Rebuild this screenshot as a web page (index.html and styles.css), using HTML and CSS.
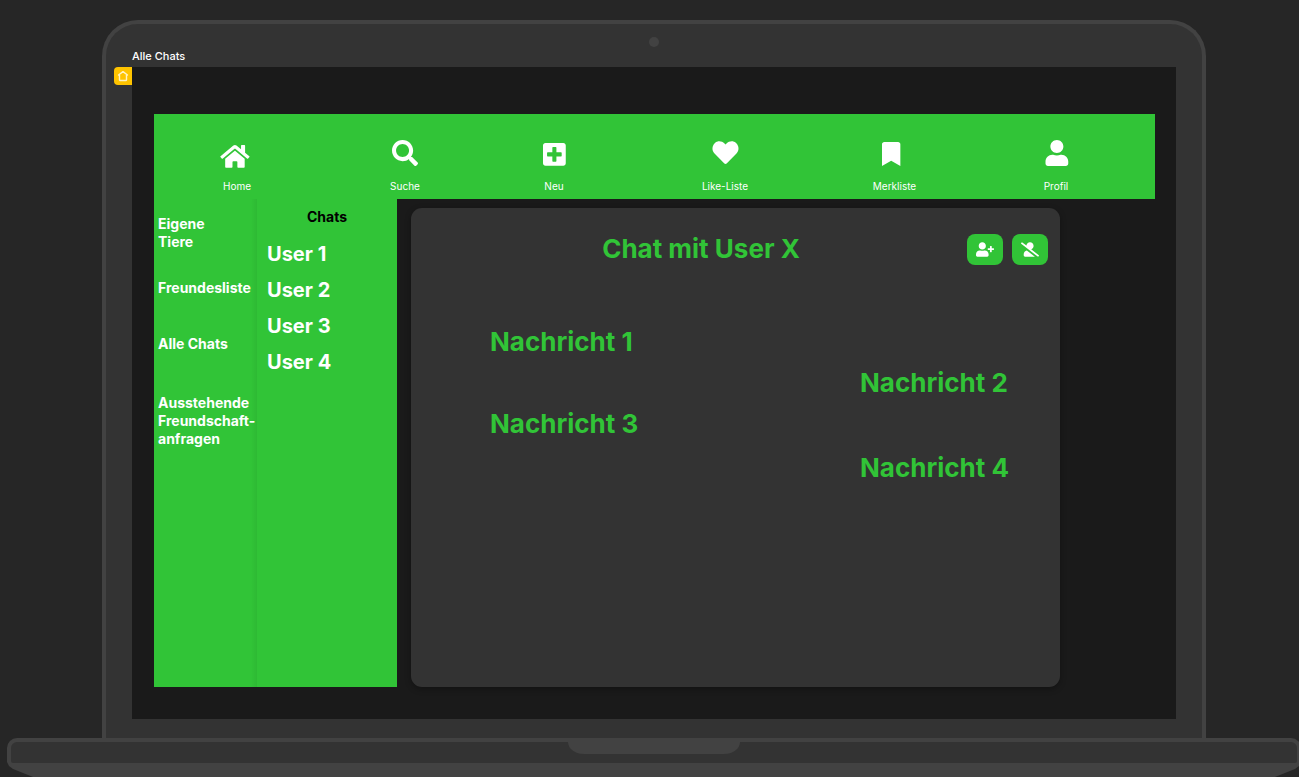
FILE: index.html
```html
<!DOCTYPE html>
<html lang="de">
<head>
<meta charset="utf-8">
<title>Alle Chats</title>
<link rel="stylesheet" href="styles.css">
</head>
<body>
<div class="lid">
  <div class="bezel">
    <span class="screen-name">Alle Chats</span>
    <span class="camera"></span>
  </div>
  <div class="screen">
    <span class="start-flag">
      <svg width="12" height="12" viewBox="0 0 12 12" aria-hidden="true"><path d="M6 1.6 1.5 5h1v5.1c0 .2.2.4.4.4h6.2c.2 0 .4-.2.4-.4V5h1z" fill="none" stroke="#fff3c4" stroke-width="1.4" stroke-linejoin="round"/></svg>
    </span>
    <nav class="topnav">
      <a class="tab" href="#home">
        <svg class="tab-icon" viewBox="0 0 36 30" aria-hidden="true"><path transform="translate(1.3 4.4) scale(.0508)" d="M280.37 148.26L96 300.11V464a16 16 0 0 0 16 16l112.06-.29a16 16 0 0 0 15.92-16V368a16 16 0 0 1 16-16h64a16 16 0 0 1 16 16v95.64a16 16 0 0 0 16 16.05L464 480a16 16 0 0 0 16-16V300L295.67 148.26a12.19 12.19 0 0 0-15.3 0zM571.6 251.47L488 182.56V44.05a12 12 0 0 0-12-12h-56a12 12 0 0 0-12 12v72.61L318.47 43a48 48 0 0 0-61 0L4.34 251.47a12 12 0 0 0-1.6 16.9l25.5 31A12 12 0 0 0 45.15 301l235.22-193.74a12.19 12.19 0 0 1 15.3 0L530.9 301a12 12 0 0 0 16.9-1.6l25.5-31a12 12 0 0 0-1.7-16.93z"/></svg>
        <span>Home</span>
      </a>
      <a class="tab" href="#suche">
        <svg class="tab-icon" viewBox="0 0 36 30" aria-hidden="true"><path transform="translate(5 1) scale(.0508)" d="M505 442.7L405.3 343c-4.5-4.5-10.6-7-17-7H372c27.6-35.3 44-79.7 44-128C416 93.1 322.9 0 208 0S0 93.1 0 208s93.1 208 208 208c48.3 0 92.7-16.4 128-44v16.3c0 6.4 2.5 12.5 7 17l99.7 99.7c9.4 9.4 24.6 9.4 33.9 0l28.3-28.3c9.4-9.4 9.4-24.6.1-34zM208 336c-70.7 0-128-57.2-128-128 0-70.7 57.2-128 128-128 70.7 0 128 57.2 128 128 0 70.7-57.2 128-128 128z"/></svg>
        <span>Suche</span>
      </a>
      <a class="tab" href="#neu">
        <svg class="tab-icon" viewBox="0 0 36 30" aria-hidden="true"><path transform="translate(7 2.4) scale(.0508)" d="M400 32H48C21.5 32 0 53.5 0 80v352c0 26.5 21.5 48 48 48h352c26.5 0 48-21.5 48-48V80c0-26.5-21.5-48-48-48zm-32 252c0 6.6-5.4 12-12 12h-92v92c0 6.6-5.4 12-12 12h-56c-6.6 0-12-5.4-12-12v-92H92c-6.6 0-12-5.4-12-12v-56c0-6.6 5.4-12 12-12h92v-92c0-6.6 5.4-12 12-12h56c6.6 0 12 5.4 12 12v92h92c6.6 0 12 5.4 12 12v56z"/></svg>
        <span>Neu</span>
      </a>
      <a class="tab" href="#likes">
        <svg class="tab-icon" viewBox="0 0 36 30" aria-hidden="true"><path transform="translate(5.5 .7) scale(.0508)" d="M462.3 62.6C407.5 15.9 326 24.3 275.7 76.2L256 96.5l-19.7-20.3C186.1 24.3 104.5 15.9 49.7 62.6c-62.8 53.6-66.1 149.8-9.9 207.9l193.5 199.8c12.5 12.9 32.8 12.9 45.3 0l193.5-199.8c56.3-58.1 53-154.3-9.8-207.9z"/></svg>
        <span>Like-Liste</span>
      </a>
      <a class="tab" href="#merkliste">
        <svg class="tab-icon" viewBox="0 0 36 30" aria-hidden="true"><path transform="translate(5 3) scale(.0478 .0469)" d="M0 512V48C0 21.49 21.49 0 48 0h288c26.51 0 48 21.49 48 48v464L192 400 0 512z"/></svg>
        <span>Merkliste</span>
      </a>
      <a class="tab" href="#profil">
        <svg class="tab-icon" viewBox="0 0 36 30" aria-hidden="true"><path transform="translate(7.5 1) scale(.0508)" d="M224 256c70.7 0 128-57.3 128-128S294.7 0 224 0 96 57.3 96 128s57.3 128 128 128zm89.6 32h-16.7c-22.2 10.2-46.9 16-72.9 16s-50.6-5.8-72.9-16h-16.7C60.2 288 0 348.2 0 422.4V464c0 26.5 21.5 48 48 48h352c26.5 0 48-21.5 48-48v-41.6c0-74.2-60.2-134.4-134.4-134.4z"/></svg>
        <span>Profil</span>
      </a>
    </nav>
    <div class="workspace">
      <nav class="sidebar">
        <a href="#tiere">Eigene<br>Tiere</a>
        <a href="#freunde">Freundesliste</a>
        <a href="#chats">Alle Chats</a>
        <a href="#anfragen">Ausstehende<br>Freundschaft-<br>anfragen</a>
      </nav>
      <section class="chat-list">
        <h2>Chats</h2>
        <a href="#user1">User 1</a>
        <a href="#user2">User 2</a>
        <a href="#user3">User 3</a>
        <a href="#user4">User 4</a>
      </section>
      <main class="chat">
        <header class="chat-head">
          <h1>Chat mit User X</h1>
          <div class="actions">
            <button type="button" aria-label="Freund hinzufügen"><svg width="18" height="15" viewBox="0 0 640 512" aria-hidden="true"><path d="M624 208h-64v-64c0-8.8-7.2-16-16-16h-32c-8.8 0-16 7.2-16 16v64h-64c-8.8 0-16 7.2-16 16v32c0 8.8 7.2 16 16 16h64v64c0 8.8 7.2 16 16 16h32c8.8 0 16-7.2 16-16v-64h64c8.8 0 16-7.2 16-16v-32c0-8.8-7.2-16-16-16zm-400 48c70.7 0 128-57.3 128-128S294.7 0 224 0 96 57.3 96 128s57.3 128 128 128zm89.6 32h-16.7c-22.2 10.2-46.9 16-72.9 16s-50.6-5.8-72.9-16h-16.7C60.2 288 0 348.2 0 422.4V464c0 26.5 21.5 48 48 48h352c26.5 0 48-21.5 48-48v-41.6c0-74.2-60.2-134.4-134.4-134.4z"/></svg></button>
            <button type="button" aria-label="Freund entfernen"><svg width="18" height="15" viewBox="0 0 640 512" aria-hidden="true"><path d="M633.8 458.1L362.3 248.3C412.1 230.7 448 183.8 448 128 448 57.3 390.7 0 320 0c-67.1 0-121.5 51.8-126.9 117.4L45.5 3.4C38.5-2 28.5-.8 23 6.2L3.4 31.4c-5.4 7-4.2 17 2.8 22.4l588.4 454.7c7 5.5 17 4.2 22.5-2.8l19.6-25.3c5.4-6.8 4.1-16.9-2.9-22.3zM96 422.4V464c0 26.5 21.5 48 48 48h350.2L207.4 290.3C144.2 301.3 96 356 96 422.4z"/></svg></button>
          </div>
        </header>
        <div class="messages">
          <p>Nachricht 1</p>
          <p class="sent">Nachricht 2</p>
          <p>Nachricht 3</p>
          <p class="sent">Nachricht 4</p>
        </div>
      </main>
    </div>
  </div>
</div>
<div class="base">
  <div class="deck"><div class="notch"></div></div>
</div>
</body>
</html>
```
FILE: styles.css
```css
:root {
  --green: #31c437;
  --edge: #424242;
  --shell: #333;
}

* { box-sizing: border-box; }

body {
  margin: 0;
  padding-top: 20px;
  min-height: 100vh;
  display: flex;
  flex-direction: column;
  overflow-x: hidden;
  background: #262626;
  color: #fff;
  font-family: Inter, "Liberation Sans", sans-serif;
}

a { color: inherit; text-decoration: none; }
h1, h2, p { margin: 0; }

.lid {
  flex: 1;
  display: flex;
  flex-direction: column;
  margin: 0 93px 0 102px;
  padding: 0 26px 19px;
  border: 4px solid var(--edge);
  border-bottom: 0;
  border-radius: 36px 36px 0 0;
  background: var(--shell);
}

.bezel {
  display: grid;
  grid-template-columns: 1fr 10px 1fr;
  height: 43px;
  padding: 13px 0 4px;
}

.screen-name {
  align-self: end;
  font-size: 11px;
  line-height: 14px;
  font-weight: 500;
}

.camera {
  width: 10px;
  height: 10px;
  border-radius: 50%;
  background: var(--edge);
}

.screen {
  position: relative;
  flex: 1;
  display: flex;
  flex-direction: column;
  padding: 47px 21px 32px 22px;
  background: #1a1a1a;
}

.start-flag {
  position: absolute;
  top: 0;
  right: 100%;
  display: grid;
  place-items: center;
  width: 18px;
  height: 18px;
  border-radius: 4px 0 0 4px;
  background: #ffc400;
}

.topnav {
  display: grid;
  grid-template-columns: 166fr 170fr 128fr 214fr 125fr 198fr;
  height: 85px;
  padding-top: 25px;
  background: var(--green);
}

.tab {
  display: flex;
  flex-direction: column;
  align-items: center;
  gap: 9px;
  font-size: 10px;
  line-height: 16px;
}

.tab-icon { width: 36px; height: 30px; fill: #fff; }

.workspace {
  flex: 1;
  display: grid;
  grid-template-columns: 103fr 140fr 14fr 649fr 95fr;
}

.sidebar {
  display: flex;
  flex-direction: column;
  align-items: flex-start;
  padding: 16px 0 0 4px;
  background: linear-gradient(to left, #2eb934, var(--green) 6px);
  font-size: 14px;
  line-height: 18px;
  font-weight: 700;
  white-space: nowrap;
}

.sidebar a { margin-bottom: 38px; }
.sidebar a:first-child { margin-bottom: 28px; }
.sidebar a:nth-child(3) { margin-bottom: 41px; }

.chat-list {
  display: flex;
  flex-direction: column;
  padding: 9px 0 0 10px;
  background: var(--green);
  font-size: 20px;
  line-height: 36px;
  font-weight: 700;
}

.chat-list h2 {
  margin-bottom: 10px;
  padding-right: 10px;
  color: #000;
  font-size: 14px;
  line-height: 18px;
  text-align: center;
}

.chat {
  grid-column: 4;
  margin-top: 9px;
  border-radius: 11px;
  background: var(--shell);
  box-shadow: 0 2px 6px rgba(0, 0, 0, .3);
  color: var(--green);
}

.chat-head {
  display: flex;
  align-items: center;
  padding: 25px 12px 0 24px;
}

.chat-head h1 {
  flex: 1;
  font-size: 26px;
  line-height: 32px;
  text-align: center;
}

.actions { display: flex; gap: 9px; }

.actions button {
  display: grid;
  place-items: center;
  width: 36px;
  height: 31px;
  padding: 0;
  border: 0;
  border-radius: 8px;
  background: var(--green);
}

.actions svg { fill: #fff; }

.messages {
  display: flex;
  flex-direction: column;
  gap: 9px;
  padding: 61px 51px 0 79px;
  font-size: 26px;
  line-height: 32px;
  font-weight: 700;
}

.sent {
  align-self: flex-end;
  min-width: 149px;
}

.base {
  height: 39px;
  margin: 0 -2px 0 7px;
  padding: 4px 4px 0;
  border-radius: 10px 10px 0 0;
  background: var(--edge);
  clip-path: polygon(0 0, 100% 0, 100% 24px, calc(100% - 2px) 28px, calc(100% - 6px) 31px, calc(100% - 26px) 39px, 26px 39px, 6px 31px, 2px 28px, 0 24px);
}

.sent:last-child { margin-top: 3px; }

.deck {
  height: 21px;
  border-radius: 6px 6px 2px 2px;
  background: var(--shell);
}

.notch {
  width: 172px;
  height: 12px;
  margin: 0 auto;
  border-radius: 0 0 16px 16px / 0 0 12px 12px;
  background: var(--edge);
}
```
